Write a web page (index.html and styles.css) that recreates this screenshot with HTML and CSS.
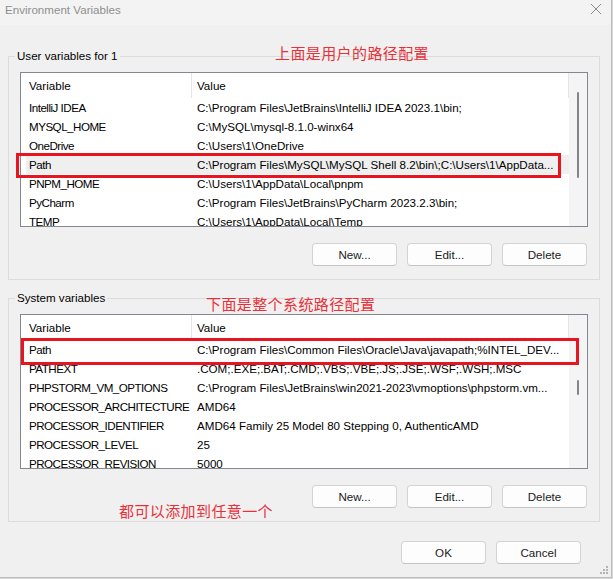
FILE: index.html
```html
<!DOCTYPE html>
<html lang="en">
<head>
    <meta charset="UTF-8">
    <meta name="viewport" content="width=device-width, initial-scale=1.0">
    <title>Environment Variables</title>
    <link rel="stylesheet" href="styles.css">
</head>
<body>
    <div class="window">
        <div class="titlebar">
            <span class="title">Environment Variables</span>
            <svg class="close" width="12" height="12" viewBox="0 0 12 12">
                <path d="M1 1 L11 11 M11 1 L1 11" stroke="#8a8a8a" stroke-width="1" fill="none"/>
            </svg>
        </div>

        <div class="content">
            <fieldset class="group">
                <legend>User variables for 1</legend>
                <div class="list">
                    <div class="list-main">
                        <div class="list-head">
                            <div class="col-var">Variable</div>
                            <div class="col-val">Value</div>
                        </div>
                        <div class="row"><div class="col-var">IntelliJ IDEA</div><div class="col-val">C:\Program Files\JetBrains\IntelliJ IDEA 2023.1\bin;</div></div>
                        <div class="row"><div class="col-var">MYSQL_HOME</div><div class="col-val">C:\MySQL\mysql-8.1.0-winx64</div></div>
                        <div class="row"><div class="col-var">OneDrive</div><div class="col-val">C:\Users\1\OneDrive</div></div>
                        <div class="row selected"><div class="col-var">Path</div><div class="col-val">C:\Program Files\MySQL\MySQL Shell 8.2\bin\;C:\Users\1\AppData...</div></div>
                        <div class="row"><div class="col-var">PNPM_HOME</div><div class="col-val">C:\Users\1\AppData\Local\pnpm</div></div>
                        <div class="row"><div class="col-var">PyCharm</div><div class="col-val">C:\Program Files\JetBrains\PyCharm 2023.2.3\bin;</div></div>
                        <div class="row"><div class="col-var">TEMP</div><div class="col-val">C:\Users\1\AppData\Local\Temp</div></div>
                    </div>
                    <div class="track"><div class="thumb thumb-user"></div></div>
                    <div class="mark mark-user"></div>
                </div>
                <div class="actions">
                    <button class="btn">New...</button>
                    <button class="btn">Edit...</button>
                    <button class="btn">Delete</button>
                </div>
            </fieldset>

            <fieldset class="group">
                <legend>System variables</legend>
                <div class="list">
                    <div class="list-main">
                        <div class="list-head">
                            <div class="col-var">Variable</div>
                            <div class="col-val">Value</div>
                        </div>
                        <div class="row"><div class="col-var">Path</div><div class="col-val">C:\Program Files\Common Files\Oracle\Java\javapath;%INTEL_DEV...</div></div>
                        <div class="row"><div class="col-var">PATHEXT</div><div class="col-val">.COM;.EXE;.BAT;.CMD;.VBS;.VBE;.JS;.JSE;.WSF;.WSH;.MSC</div></div>
                        <div class="row"><div class="col-var">PHPSTORM_VM_OPTIONS</div><div class="col-val">C:\Program Files\JetBrains\win2021-2023\vmoptions\phpstorm.vm...</div></div>
                        <div class="row"><div class="col-var">PROCESSOR_ARCHITECTURE</div><div class="col-val">AMD64</div></div>
                        <div class="row"><div class="col-var">PROCESSOR_IDENTIFIER</div><div class="col-val">AMD64 Family 25 Model 80 Stepping 0, AuthenticAMD</div></div>
                        <div class="row"><div class="col-var">PROCESSOR_LEVEL</div><div class="col-val">25</div></div>
                        <div class="row"><div class="col-var">PROCESSOR_REVISION</div><div class="col-val">5000</div></div>
                    </div>
                    <div class="track"><div class="thumb thumb-system"></div></div>
                    <div class="mark mark-system"></div>
                </div>
                <div class="actions">
                    <button class="btn">New...</button>
                    <button class="btn">Edit...</button>
                    <button class="btn">Delete</button>
                </div>
            </fieldset>

            <div class="dialog-actions">
                <button class="btn">OK</button>
                <button class="btn">Cancel</button>
            </div>
        </div>

        <!-- red notes written over the screenshot -->
        <div class="note note-user">上面是用户的路径配置</div>
        <div class="note note-system">下面是整个系统路径配置</div>
        <div class="note note-any">都可以添加到任意一个</div>

        <svg class="grip" width="9" height="9" viewBox="0 0 9 9">
            <rect x="6" y="0" width="2" height="2" fill="#b4b4b4"/>
            <rect x="3" y="3" width="2" height="2" fill="#b4b4b4"/>
            <rect x="6" y="3" width="2" height="2" fill="#b4b4b4"/>
            <rect x="0" y="6" width="2" height="2" fill="#b4b4b4"/>
            <rect x="3" y="6" width="2" height="2" fill="#b4b4b4"/>
            <rect x="6" y="6" width="2" height="2" fill="#b4b4b4"/>
        </svg>
    </div>
</body>
</html>
```

FILE: styles.css
```css
* {
    box-sizing: border-box;
}

body {
    margin: 0;
    background: #d6d6d6;
    font-family: 'Liberation Sans', sans-serif;
    font-size: 11.6px;
    color: black;
}

.window {
    position: relative;
    width: 612px;
    height: 578px;
    background-color: #f0f0f0;
    border-right: 1px solid #bdbdbd;
    border-bottom: 1px solid #bdbdbd;
    display: flex;
    flex-direction: column;
}

.titlebar {
    height: 25px;
    background-color: #f3f3f3;
    display: flex;
    align-items: flex-start;
    justify-content: space-between;
    padding: 2px 9px 0 5px;
}

.title {
    line-height: 16px;
    color: #8f8f8f;
}

.close {
    margin-top: 1px;
}

.content {
    padding: 23px 11px 0 8px;
}

.group {
    margin: 0;
    min-width: 0;
    border: 1px solid #dcdcdc;
    padding: 0 11px 13px;
}

.group + .group {
    margin-top: 10px;
}

.group legend {
    line-height: 16px;
    padding: 0 2px;
    margin-left: -5px;
}

.list {
    position: relative;
    display: flex;
    height: 155px;
    margin-top: 8px;
    border: 1px solid #828790;
    background-color: white;
}

.list-main {
    flex: 1;
    min-width: 0;
    overflow: hidden;
}

.list-head {
    display: flex;
    height: 25px;
    line-height: 25px;
}

.row {
    display: flex;
    height: 19px;
    line-height: 19px;
    white-space: nowrap;
}

.col-var {
    width: 171px;
    flex-shrink: 0;
    padding-left: 8px;
    overflow: hidden;
}

.row .col-var {
    letter-spacing: -0.5px;
}

.col-val {
    flex: 1;
    min-width: 0;
    padding-left: 5px;
    overflow: hidden;
}

.list-head .col-var,
.list-head .col-val {
    border-right: 1px solid #e5e5e5;
}

.row.selected {
    background: linear-gradient(to right, transparent 5px, #efefef 5px);
}

.track {
    position: relative;
    width: 18px;
    background-color: #f4f4f4;
}

.thumb {
    position: absolute;
    left: 8px;
    width: 2px;
    border-radius: 1px;
    background-color: #858585;
}

.thumb-user {
    top: 19px;
    height: 86px;
}

.thumb-system {
    top: 65px;
    height: 15px;
}

.mark {
    position: absolute;
    border: 3px solid #e8141f;
}

.mark-user {
    left: -5px;
    top: 80px;
    width: 545px;
    height: 25px;
}

.mark-system {
    left: 0;
    top: 23px;
    width: 558px;
    height: 27px;
}

.actions {
    display: flex;
    justify-content: flex-end;
    gap: 10px;
    margin-top: 16px;
    padding-right: 1px;
}

.btn {
    width: 85px;
    height: 23px;
    padding: 0;
    font: inherit;
    color: #1b1b1b;
    background-color: #fdfdfd;
    border: 1px solid #d3d3d3;
    border-bottom-color: #c4c4c4;
    border-radius: 4px;
}

.dialog-actions {
    display: flex;
    justify-content: flex-end;
    gap: 10px;
    margin-top: 19px;
    padding-right: 19px;
}

.note {
    position: absolute;
    font-family: 'Noto Sans CJK SC', sans-serif;
    font-size: 15px;
    line-height: 20px;
    letter-spacing: 0.4px;
    color: #e8303a;
}

.note-user {
    left: 275px;
    top: 43px;
}

.note-system {
    left: 206px;
    top: 294px;
}

.note-any {
    left: 119px;
    top: 501px;
}

.grip {
    position: absolute;
    right: 2px;
    bottom: 2px;
}
```
